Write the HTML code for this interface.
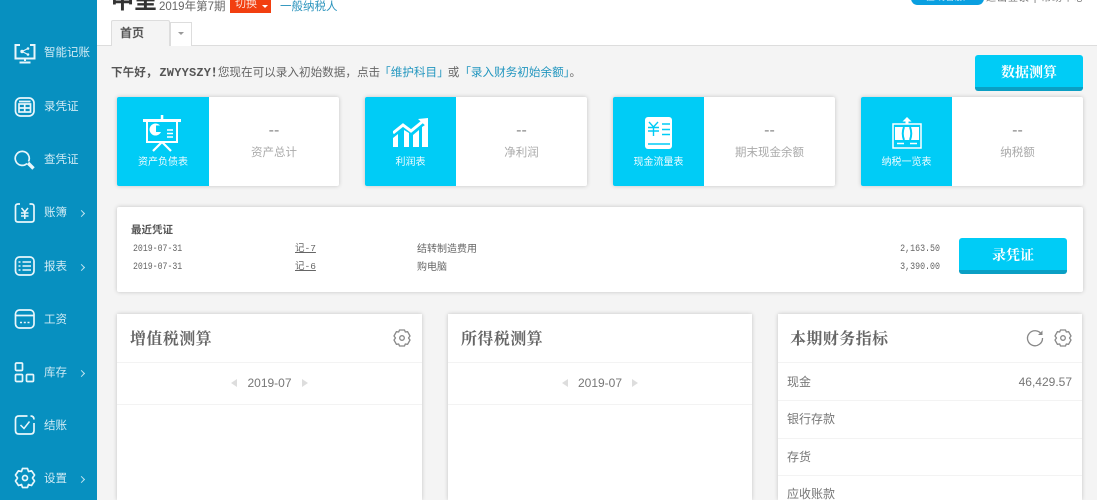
<!DOCTYPE html>
<html><head><meta charset="utf-8">
<style>
html,body{margin:0;padding:0;width:1097px;height:500px;overflow:hidden;background:#f4f4f4;font-family:"Liberation Sans","Noto Sans CJK SC",sans-serif;color:#555}
#wrap{position:absolute;left:0;top:0;width:1097px;height:500px;overflow:hidden;filter:blur(.3px)}
.a{position:absolute;white-space:nowrap}
#side{position:absolute;left:0;top:0;width:97px;height:500px;background:#0790c0}
#side .t{position:absolute;left:44px;font-size:11.5px;color:#cfeaf4;line-height:16px}
#side svg{position:absolute;left:14px;fill:none;stroke:#e8f6fb;stroke-width:1.7}
#side .c{position:absolute;left:79px;width:4px;height:4px;border-top:1px solid #bfe3f0;border-right:1px solid #bfe3f0;transform:rotate(45deg)}
#head{position:absolute;left:97px;top:0;width:1000px;height:45px;background:#fff;border-bottom:1px solid #ddd}
.card{position:absolute;top:97px;width:222px;height:89px;background:#fff;border-radius:2px;box-shadow:0 0 4px rgba(0,0,0,.2)}
.card .l{position:absolute;left:0;top:0;width:92px;height:89px;background:#00ccf6;color:#fff;border-radius:2px 0 0 2px}
.card .l span{position:absolute;left:0;right:0;top:59px;text-align:center;font-size:10px;line-height:14px;color:#eefbff}
.card .l svg{position:absolute}
.card .d{position:absolute;left:92px;right:0;top:26px;text-align:center;font-size:16px;line-height:16px;color:#888}
.card .n{position:absolute;left:92px;right:0;top:47px;text-align:center;font-size:11.5px;line-height:18px;color:#aaa}
.panel{position:absolute;top:314px;height:186px;background:#fff;box-shadow:0 0 4px rgba(0,0,0,.2)}
.panel .h{position:absolute;left:13px;top:12px;font-family:"Noto Serif CJK SC","Liberation Serif",serif;font-size:16px;line-height:24px;color:#666;font-weight:700;letter-spacing:.4px}
.panel .ln{position:absolute;left:0;right:0;height:1px;background:#f3f3f3}
.panel .m{position:absolute;left:0;right:0;top:61px;text-align:center;font-size:12px;line-height:16px;color:#777}
.tr{display:inline-block;width:0;height:0;border-top:4px solid transparent;border-bottom:4px solid transparent;vertical-align:0}
.row{position:absolute;left:9px;font-size:12px;line-height:16px;color:#777}
.btn{position:absolute;background:#00ccf6;border-bottom:4px solid #0a9fc4;border-radius:3px;color:#fff;text-align:center;font-family:"Noto Serif CJK SC","Liberation Serif",serif;font-weight:700;box-sizing:border-box}
.m1{font-family:"Liberation Mono","WenQuanYi Zen Hei",monospace;font-size:10px;color:#666;line-height:12px}
.dt{transform:scaleX(.82);transform-origin:0 50%}
.am{transform:scaleX(.83);transform-origin:100% 50%}
</style></head><body><div id="wrap">
<div id="side">
<svg style="top:43px" width="22" height="22" viewBox="0 0 22 22"><path d="M6 2H1.500V15.500H20.500V2H16" stroke-width="2"/><path d="M11 15.500V18M5.500 19.500H16.500" stroke-width="2"/><path d="M8 8.500L14 5.500M8 8.500L14 11.500" stroke-width="1"/><circle cx="8" cy="8.500" r="1.700" fill="#e8f6fb" stroke="none"/><circle cx="14" cy="5.500" r="1.300" fill="#e8f6fb" stroke="none"/><circle cx="14" cy="11.500" r="1.300" fill="#e8f6fb" stroke="none"/></svg>
<span class="t" style="top:45px">智能记账</span>
<svg style="top:96px" width="22" height="22" viewBox="0 0 22 22"><rect x="1.500" y="2" width="18.500" height="18" rx="5"/><rect x="5" y="8" width="11.500" height="8"/><path d="M5 5.500H16.500M5 12H16.500M10.700 8V16"/></svg>
<span class="t" style="top:99px">录凭证</span>
<svg style="top:149px" width="22" height="22" viewBox="0 0 22 22"><path d="M13 14.500A7 7 0 1 1 14.500 12.500"/><path d="M14 14L19.500 19.500" stroke-width="3.400"/></svg>
<span class="t" style="top:152px">查凭证</span>
<svg style="top:202px" width="22" height="22" viewBox="0 0 22 22"><path d="M6 2H4Q1.500 2 1.500 4.500V17.500Q1.500 20 4 20H17.500Q20 20 20 17.500V4.500Q20 2 17.500 2H15.500"/><path d="M7.500 6L10.800 10L14 6M7 11H14.500M7 14H14.500M10.800 10V17" stroke-width="1.500"/></svg>
<span class="t" style="top:205px">账簿</span><i class="c" style="top:211px"></i>
<svg style="top:255px" width="22" height="22" viewBox="0 0 22 22"><rect x="1.500" y="2" width="18.500" height="18" rx="4"/><path d="M8.500 7H17M8.500 11H17M8.500 15H17M4.500 7H6.500M4.500 11H6.500M4.500 15H6.500" stroke-width="1.400"/></svg>
<span class="t" style="top:259px">报表</span><i class="c" style="top:265px"></i>
<svg style="top:308px" width="22" height="22" viewBox="0 0 22 22"><rect x="1.500" y="2" width="18.500" height="18" rx="4"/><path d="M1.500 7.500H20"/><path d="M6 14.500h2M9.800 14.500h2M13.500 14.500h2" stroke-width="1.600"/></svg>
<span class="t" style="top:312px">工资</span>
<svg style="top:361px" width="22" height="22" viewBox="0 0 22 22"><rect x="1.500" y="2" width="7" height="7.500" rx="1"/><rect x="1.500" y="13.500" width="7" height="7" rx="1"/><rect x="12.500" y="13.500" width="7" height="7" rx="1"/></svg>
<span class="t" style="top:365px">库存</span><i class="c" style="top:371px"></i>
<svg style="top:414px" width="22" height="22" viewBox="0 0 22 22"><path d="M13.500 2H5Q1.500 2 1.500 5.500V16.500Q1.500 20 5 20H16.500Q20 20 20 16.500V9M16.500 2Q20 2 20 5.500"/><path d="M6.500 11L10 14.500L15.500 7.500" stroke-width="1.500"/></svg>
<span class="t" style="top:418px">结账</span>
<svg style="top:467px" width="22" height="22" viewBox="0 0 22 22"><path d="M8.500 1.500H13.500L14.500 4.500L17.500 3.800L20.500 8L18.500 11L20.500 14L17.500 18.500L14.500 17.500L13.500 20.500H8.500L7.500 17.500L4.500 18.500L1.500 14L3.500 11L1.500 8L4.500 3.800L7.500 4.500Z" stroke-linejoin="round"/><circle cx="11" cy="11" r="2.500"/></svg>
<span class="t" style="top:471px">设置</span><i class="c" style="top:477px"></i>
</div>

<div id="head"></div>
<div class="a" style="left:111px;top:-12px;font-size:23px;line-height:24px;font-weight:bold;color:#333">中呈</div>
<div class="a" style="left:159px;top:0;font-size:11.500px;line-height:14px;color:#666">2019年第7期</div>
<div class="a" style="left:230px;top:-4px;width:41px;height:17px;background:#f23f10;color:#fde0d6;font-size:11px;line-height:16px;padding-left:5px;box-sizing:border-box">切换</div>
<div class="a" style="left:262px;top:5px;width:0;height:0;border-left:3px solid transparent;border-right:3px solid transparent;border-top:3px solid #fff"></div>
<div class="a" style="left:280px;top:0;font-size:11.500px;line-height:14px;color:#2c94bd">一般纳税人</div>
<div class="a" style="left:911px;top:-8px;width:73px;height:13px;background:#0a9fe0;border-radius:7px;color:#d5f0fb;font-size:10px;line-height:12px;padding-left:14px;box-sizing:border-box">在线客服</div>
<div class="a" style="left:986px;top:-7px;font-size:10px;line-height:12px;color:#777;letter-spacing:1px">退出登录 | 帮助中心</div>

<div class="a" style="left:111px;top:20px;width:59px;height:26px;background:#f4f4f4;border:1px solid #ddd;border-bottom:0;border-radius:2px 2px 0 0;box-sizing:border-box;font-size:12px;line-height:24px;font-weight:bold;color:#555;padding-left:8px">首页</div>
<div class="a" style="left:170px;top:22px;width:22px;height:24px;background:#fff;border:1px solid #ddd;border-bottom:0;box-sizing:border-box"></div>
<div class="a" style="left:178px;top:32px;width:0;height:0;border-left:3px solid transparent;border-right:3px solid transparent;border-top:3px solid #999"></div>

<div class="a" style="left:111px;top:65px;font-size:11.600px;line-height:16px;color:#666"><b style="color:#555">下午好，<span style="font-family:'Liberation Mono',monospace;font-size:12px;letter-spacing:.2px;margin-left:2px">ZWYYSZY</span><span style="margin-right:-5px">！</span></b>您现在可以录入初始数据，点击<span style="color:#2296bf;margin-left:-1px">「维护科目」</span><span style="margin-left:-1px">或</span><span style="color:#2296bf">「录入财务初始余额」</span>。</div>
<div class="btn" style="left:975px;top:55px;width:108px;height:36px;font-size:14px;line-height:34px">数据测算</div>

<div class="card" style="left:117px"><div class="l">
<svg width="38" height="37" viewBox="0 0 38 37" style="left:26px;top:18px"><path d="M0 4H38V7H0Z" fill="#fff"/><rect x="17.800" y="0" width="2.500" height="4" fill="#fff"/><path d="M4 7V27H34V7" fill="none" stroke="#fff" stroke-width="2"/><path d="M19 27L10 36M19 27L28 36" stroke="#fff" stroke-width="2.200"/><path d="M17 10.500A6 6 0 1 0 18 17H13V10.500Z" fill="#fff"/><path d="M24 15H30M24 18.500H30M24 22H30" stroke="#fff" stroke-width="1.600"/></svg>
<span>资产负债表</span></div><div class="d">--</div><div class="n">资产总计</div></div>

<div class="card" style="left:365px"><div class="l" style="width:91px">
<svg width="36" height="30" viewBox="0 0 36 30" style="left:28px;top:21px"><path d="M0 15L10 7L18 13L29 4" fill="none" stroke="#fff" stroke-width="3"/><path d="M25 1L35 0V10Z" fill="#fff"/><path d="M0 29V20L5 16V29ZM11 29V12L16 15V29ZM20 29V17L26 12V29ZM29 29V9L35 5V29Z" fill="#fff"/></svg>
<span>利润表</span></div><div class="d" style="left:91px">--</div><div class="n" style="left:91px">净利润</div></div>

<div class="card" style="left:613px"><div class="l" style="width:91px">
<svg width="28" height="33" viewBox="0 0 28 33" style="left:32px;top:20px"><rect width="27" height="32" rx="3" fill="#fff"/><path d="M4 5L8.500 10L13 5M3 10.500H14M3 14H14M8.500 10V19M17 7H25M17 12.500H25M17 17.500H25M3 27H25" stroke="#00ccf6" stroke-width="1.400" fill="none"/></svg>
<span>现金流量表</span></div><div class="d" style="left:91px">--</div><div class="n" style="left:91px">期末现金余额</div></div>

<div class="card" style="left:861px"><div class="l" style="width:91px">
<svg width="30" height="32" viewBox="0 0 30 32" style="left:31px;top:20px"><path d="M15 0L19.500 4.500H10.500Z" fill="#fff"/><rect x="13.500" y="4" width="3" height="3" fill="#fff"/><rect x="1" y="7" width="28" height="24" fill="none" stroke="#fff" stroke-width="1.500"/><rect x="3" y="10" width="24" height="13" fill="#fff"/><path d="M12 10Q9.500 16.500 12 23M18 10Q20.500 16.500 18 23" fill="none" stroke="#00ccf6" stroke-width="2"/><path d="M5 26.500H12M18 26.500H25" stroke="#fff" stroke-width="1.500"/></svg>
<span>纳税一览表</span></div><div class="d" style="left:91px">--</div><div class="n" style="left:91px">纳税额</div></div>

<div class="a" style="left:117px;top:207px;width:966px;height:85px;background:#fff;border-radius:2px;box-shadow:0 0 4px rgba(0,0,0,.2)"></div>
<div class="a" style="left:131px;top:223px;font-size:10.500px;line-height:14px;font-weight:bold;color:#555">最近凭证</div>
<div class="a m1 dt" style="left:133px;top:244px">2019-07-31</div>
<div class="a m1 dt" style="left:133px;top:262px">2019-07-31</div>
<div class="a m1" style="left:295px;top:243px;text-decoration:underline;font-size:9.500px">记-7</div>
<div class="a m1" style="left:295px;top:261px;text-decoration:underline;font-size:9.500px">记-6</div>
<div class="a" style="left:417px;top:243px;font-size:10px;line-height:14px;color:#666">结转制造费用</div>
<div class="a" style="left:417px;top:261px;font-size:10px;line-height:14px;color:#666">购电脑</div>
<div class="a m1 am" style="left:880px;width:60px;text-align:right;top:244px">2,163.50</div>
<div class="a m1 am" style="left:880px;width:60px;text-align:right;top:262px">3,390.00</div>
<div class="btn" style="left:959px;top:238px;width:108px;height:36px;font-size:14px;line-height:34px">录凭证</div>

<div class="panel" style="left:117px;width:305px"><div class="h">增值税测算</div>
<svg class="a" style="left:276px;top:15px" width="18" height="18" viewBox="0 0 18 18" fill="none" stroke="#888" stroke-width="1.300"><path d="M6.500 1H11.500L12.300 3L14.600 2.700L17 7L15.500 9L17 11L14.600 15.300L12.300 15L11.500 17H6.500L5.700 15L3.400 15.300L1 11L2.500 9L1 7L3.400 2.700L5.700 3Z" stroke-linejoin="round"/><circle cx="9" cy="9" r="2.300"/></svg>
<div class="ln" style="top:48px"></div><div class="ln" style="top:90px"></div>
<div class="m"><i class="tr" style="border-right:6px solid #ddd;margin-right:10px"></i>2019-07<i class="tr" style="border-left:6px solid #ddd;margin-left:10px"></i></div></div>

<div class="panel" style="left:448px;width:304px"><div class="h">所得税测算</div>
<div class="ln" style="top:48px"></div><div class="ln" style="top:90px"></div>
<div class="m"><i class="tr" style="border-right:6px solid #ddd;margin-right:10px"></i>2019-07<i class="tr" style="border-left:6px solid #ddd;margin-left:10px"></i></div></div>

<div class="panel" style="left:778px;width:304px"><div class="h" style="left:12px">本期财务指标</div>
<svg class="a" style="left:248px;top:15px" width="18" height="18" viewBox="0 0 18 18" fill="none" stroke="#888" stroke-width="1.300"><path d="M15.500 5.500A7.500 7.500 0 1 0 16.500 9"/><path d="M16.500 1.500V6H12" fill="#888" stroke="none"/></svg>
<svg class="a" style="left:276px;top:15px" width="18" height="18" viewBox="0 0 18 18" fill="none" stroke="#888" stroke-width="1.300"><path d="M6.500 1H11.500L12.300 3L14.600 2.700L17 7L15.500 9L17 11L14.600 15.300L12.300 15L11.500 17H6.500L5.700 15L3.400 15.300L1 11L2.500 9L1 7L3.400 2.700L5.700 3Z" stroke-linejoin="round"/><circle cx="9" cy="9" r="2.300"/></svg>
<div class="ln" style="top:48px"></div><div class="ln" style="top:86px"></div><div class="ln" style="top:124px"></div><div class="ln" style="top:161px"></div>
<div class="row" style="top:60px">现金</div><div class="a" style="right:10px;top:60px;font-size:12px;line-height:16px;color:#777">46,429.57</div>
<div class="row" style="top:97px">银行存款</div>
<div class="row" style="top:135px">存货</div>
<div class="row" style="top:172px">应收账款</div>
</div>
</div></body></html>
